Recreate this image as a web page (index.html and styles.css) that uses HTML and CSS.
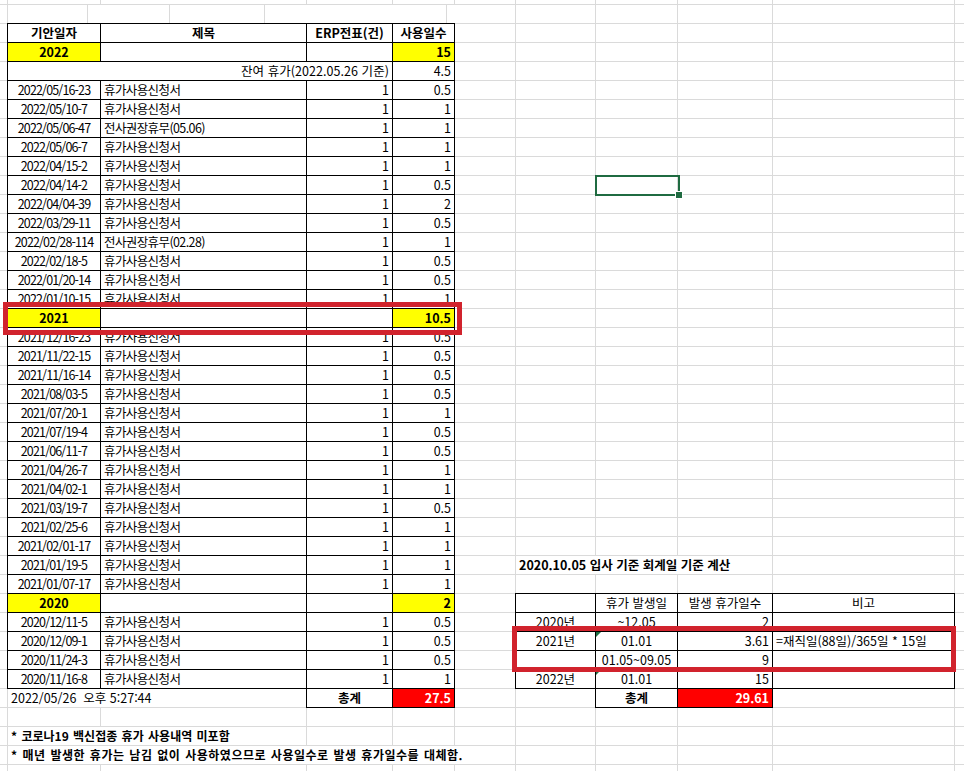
FILE: index.html
```html
<!DOCTYPE html>
<html lang="ko">
<head>
<meta charset="utf-8">
<title>휴가 사용 내역</title>
<link rel="stylesheet" href="styles.css">
</head>
<body>
<div class="sheet">
  <div class="strip">
    <div class="sc w80"></div><div class="sc w82"></div><div class="sc w95"></div><div class="sc w182"></div><div class="sc rest"></div>
  </div>

  <div class="ltable">
    <div class="td first top c bold">기안일자</div><div class="td top c bold">제목</div><div class="td top c bold">ERP전표(건)</div><div class="td top c bold">사용일수</div>

    <div class="td first c y bold">2022</div><div class="td"></div><div class="td"></div><div class="td n y bold">15</div>
    <div class="td first n span3 remain">잔여 휴가(2022.05.26 기준)</div><div class="td n">4.5</div>

    <div class="td first c dt">2022/05/16-23</div><div class="td k">휴가사용신청서</div><div class="td n">1</div><div class="td n">0.5</div>
    <div class="td first c dt">2022/05/10-7</div><div class="td k">휴가사용신청서</div><div class="td n">1</div><div class="td n">1</div>
    <div class="td first c dt">2022/05/06-47</div><div class="td k">전사권장휴무(05.06)</div><div class="td n">1</div><div class="td n">1</div>
    <div class="td first c dt">2022/05/06-7</div><div class="td k">휴가사용신청서</div><div class="td n">1</div><div class="td n">1</div>
    <div class="td first c dt">2022/04/15-2</div><div class="td k">휴가사용신청서</div><div class="td n">1</div><div class="td n">1</div>
    <div class="td first c dt">2022/04/14-2</div><div class="td k">휴가사용신청서</div><div class="td n">1</div><div class="td n">0.5</div>
    <div class="td first c dt">2022/04/04-39</div><div class="td k">휴가사용신청서</div><div class="td n">1</div><div class="td n">2</div>
    <div class="td first c dt">2022/03/29-11</div><div class="td k">휴가사용신청서</div><div class="td n">1</div><div class="td n">0.5</div>
    <div class="td first c dt">2022/02/28-114</div><div class="td k">전사권장휴무(02.28)</div><div class="td n">1</div><div class="td n">1</div>
    <div class="td first c dt">2022/02/18-5</div><div class="td k">휴가사용신청서</div><div class="td n">1</div><div class="td n">0.5</div>
    <div class="td first c dt">2022/01/20-14</div><div class="td k">휴가사용신청서</div><div class="td n">1</div><div class="td n">0.5</div>
    <div class="td first c dt">2022/01/10-15</div><div class="td k">휴가사용신청서</div><div class="td n">1</div><div class="td n">1</div>

    <div class="td first c y bold">2021</div><div class="td"></div><div class="td"></div><div class="td n y bold">10.5</div>
    <div class="td first c dt">2021/12/16-23</div><div class="td k">휴가사용신청서</div><div class="td n">1</div><div class="td n">0.5</div>
    <div class="td first c dt">2021/11/22-15</div><div class="td k">휴가사용신청서</div><div class="td n">1</div><div class="td n">0.5</div>
    <div class="td first c dt">2021/11/16-14</div><div class="td k">휴가사용신청서</div><div class="td n">1</div><div class="td n">0.5</div>
    <div class="td first c dt">2021/08/03-5</div><div class="td k">휴가사용신청서</div><div class="td n">1</div><div class="td n">0.5</div>
    <div class="td first c dt">2021/07/20-1</div><div class="td k">휴가사용신청서</div><div class="td n">1</div><div class="td n">1</div>
    <div class="td first c dt">2021/07/19-4</div><div class="td k">휴가사용신청서</div><div class="td n">1</div><div class="td n">0.5</div>
    <div class="td first c dt">2021/06/11-7</div><div class="td k">휴가사용신청서</div><div class="td n">1</div><div class="td n">0.5</div>
    <div class="td first c dt">2021/04/26-7</div><div class="td k">휴가사용신청서</div><div class="td n">1</div><div class="td n">1</div>
    <div class="td first c dt">2021/04/02-1</div><div class="td k">휴가사용신청서</div><div class="td n">1</div><div class="td n">1</div>
    <div class="td first c dt">2021/03/19-7</div><div class="td k">휴가사용신청서</div><div class="td n">1</div><div class="td n">0.5</div>
    <div class="td first c dt">2021/02/25-6</div><div class="td k">휴가사용신청서</div><div class="td n">1</div><div class="td n">1</div>
    <div class="td first c dt">2021/02/01-17</div><div class="td k">휴가사용신청서</div><div class="td n">1</div><div class="td n">1</div>
    <div class="td first c dt">2021/01/19-5</div><div class="td k">휴가사용신청서</div><div class="td n">1</div><div class="td n">1</div>
    <div class="td first c dt">2021/01/07-17</div><div class="td k">휴가사용신청서</div><div class="td n">1</div><div class="td n">1</div>

    <div class="td first c y bold">2020</div><div class="td"></div><div class="td"></div><div class="td n y bold">2</div>
    <div class="td first c dt">2020/12/11-5</div><div class="td k">휴가사용신청서</div><div class="td n">1</div><div class="td n">0.5</div>
    <div class="td first c dt">2020/12/09-1</div><div class="td k">휴가사용신청서</div><div class="td n">1</div><div class="td n">0.5</div>
    <div class="td first c dt">2020/11/24-3</div><div class="td k">휴가사용신청서</div><div class="td n">1</div><div class="td n">0.5</div>
    <div class="td first c dt">2020/11/16-8</div><div class="td k">휴가사용신청서</div><div class="td n">1</div><div class="td n">1</div>

    <div class="plain span2 stamp">2022/05/26  오후 5:27:44</div><div class="td first c bold">총계</div><div class="td n red">27.5</div>
  </div>

  <div class="title plain bold">2020.10.05 입사 기준 회계일 기준 계산</div>

  <div class="rtable">
    <div class="td first top"></div><div class="td top c">휴가 발생일</div><div class="td top c">발생 휴가일수</div><div class="td top c">비고</div>
    <div class="td first c">2020년</div><div class="td c">~12.05</div><div class="td n">2</div><div class="td"></div>
    <div class="td first c">2021년</div><div class="td c warn">01.01</div><div class="td n">3.61</div><div class="td">=재직일(88일)/365일 * 15일</div>
    <div class="td first c"></div><div class="td c">01.05~09.05</div><div class="td n">9</div><div class="td"></div>
    <div class="td first c">2022년</div><div class="td c warn">01.01</div><div class="td n">15</div><div class="td"></div>
    <div class="empty"></div><div class="td first c bold">총계</div><div class="td n red">29.61</div><div class="empty"></div>
  </div>

  <div class="sel"></div>

  <div class="note note1 plain bold">* 코로나19 백신접종 휴가 사용내역 미포함</div>
  <div class="note note2 plain bold">* 매년 발생한 휴가는 남김 없이 사용하였으므로 사용일수로 발생 휴가일수를 대체함.</div>

  <div class="mark mark-left"></div>
  <div class="mark mark-right"></div>
</div>
</body>
</html>
```

FILE: styles.css
```css
* { box-sizing: border-box; margin: 0; padding: 0; }

html, body { background: #fff; }

body {
  margin: 0;
  overflow: hidden;
  font-family: "Noto Sans CJK KR", sans-serif;
  font-size: 12.5px;
  font-feature-settings: "palt";
  color: #000;
}

.sheet {
  position: relative;
  width: 964px;
  height: 771px;
  display: grid;
  grid-template-columns: 8px 93px 206px 86px 62px 61px 80px 82px 95px 182px 1fr;
  grid-template-rows: 5px repeat(40, 19px) 1fr;
  background:
    linear-gradient(#dadada, #dadada) 7px 0 / 1px 100% no-repeat,
    linear-gradient(#dadada, #dadada) 100px 0 / 1px 100% no-repeat,
    linear-gradient(#dadada, #dadada) 306px 0 / 1px 100% no-repeat,
    linear-gradient(#dadada, #dadada) 392px 0 / 1px 100% no-repeat,
    linear-gradient(#dadada, #dadada) 454px 0 / 1px 100% no-repeat,
    linear-gradient(#dadada, #dadada) 515px 0 / 1px 100% no-repeat,
    linear-gradient(#dadada, #dadada) 595px 0 / 1px 100% no-repeat,
    linear-gradient(#dadada, #dadada) 677px 0 / 1px 100% no-repeat,
    linear-gradient(#dadada, #dadada) 772px 0 / 1px 100% no-repeat,
    linear-gradient(#dadada, #dadada) 954px 0 / 1px 100% no-repeat,
    linear-gradient(to bottom, transparent 18px, #dadada 18px) 0 5px / 100% 19px repeat-y,
    #fff;
}

/* frozen strip at top */
.strip {
  grid-row: 2;
  grid-column: 2 / 6;
  display: flex;
  background: #fff;
  border-bottom: 1px solid #dadada;
}
.sc { border-right: 1px solid #dadada; }
.w80 { width: 80px; }
.w82 { width: 82px; }
.w95 { width: 95px; }
.w182 { width: 182px; }
.rest { flex: 1; border-right: 0; }

/* tables */
.ltable, .rtable {
  display: grid;
  grid-auto-rows: 19px;
}
.ltable {
  grid-row: 3 / 39;
  grid-column: 2 / 6;
  grid-template-columns: 93px 206px 86px 62px;
}
.rtable {
  grid-row: 33 / 39;
  grid-column: 7 / 11;
  grid-template-columns: 80px 82px 95px 182px;
}

.td {
  background: #fff;
  border-right: 1px solid #000;
  border-bottom: 1px solid #000;
  padding: 0 3px;
  line-height: 18px;
  white-space: nowrap;
  overflow: hidden;
}
.first { box-shadow: -1px 0 0 #000; }
.top { box-shadow: 0 -1px 0 #000; }
.first.top { box-shadow: -1px 0 0 #000, 0 -1px 0 #000, -1px -1px 0 #000; }

.c { text-align: center; }
.n { text-align: right; }
.bold { font-weight: 700; }
.y { background: #ffff00; }
.red { background: #ff0000; color: #fff; font-weight: 700; }
.span3 { grid-column: span 3; }
.span2 { grid-column: span 2; }

.dt { letter-spacing: -0.85px; padding: 0 1px; }
.k { letter-spacing: -0.6px; }
.remain { letter-spacing: 0.05px; }

.plain {
  background: #fff;
  line-height: 18px;
  white-space: pre;
  border-bottom: 1px solid #dadada;
  padding: 0 3px;
}
.stamp { border-right: 1px solid #dadada; }

.warn { position: relative; }
.warn::before {
  content: "";
  position: absolute;
  left: 0;
  top: 0;
  border-top: 5px solid #1d7044;
  border-right: 5px solid transparent;
}

.title {
  grid-row: 31;
  grid-column: 7 / 10;
  border-right: 1px solid #dadada;
}

.note {
  font-size: 12px;
  font-feature-settings: normal;
  word-spacing: 1px;
}
.note1 { grid-row: 40; grid-column: 2 / 4; border-right: 1px solid #dadada; }
.note2 {
  grid-row: 41;
  grid-column: 2 / 7;
  border-right: 1px solid #dadada;
  letter-spacing: 0.5px;
}

/* selected cell */
.sel {
  grid-row: 11;
  grid-column: 8;
  margin: -1px -2px -1px -1px;
  border: 2px solid #1f6b41;
  position: relative;
}
.sel::after {
  content: "";
  position: absolute;
  right: -5px;
  bottom: -5px;
  width: 6px;
  height: 6px;
  background: #1f6b41;
  border: 1px solid #fff;
}

/* red annotation boxes */
.mark {
  position: absolute;
  border: 5px solid #d1232d;
}
.mark-left { left: 3px; top: 302px; width: 459px; height: 33px; }
.mark-right { left: 512px; top: 626px; width: 444px; height: 46px; }
```
